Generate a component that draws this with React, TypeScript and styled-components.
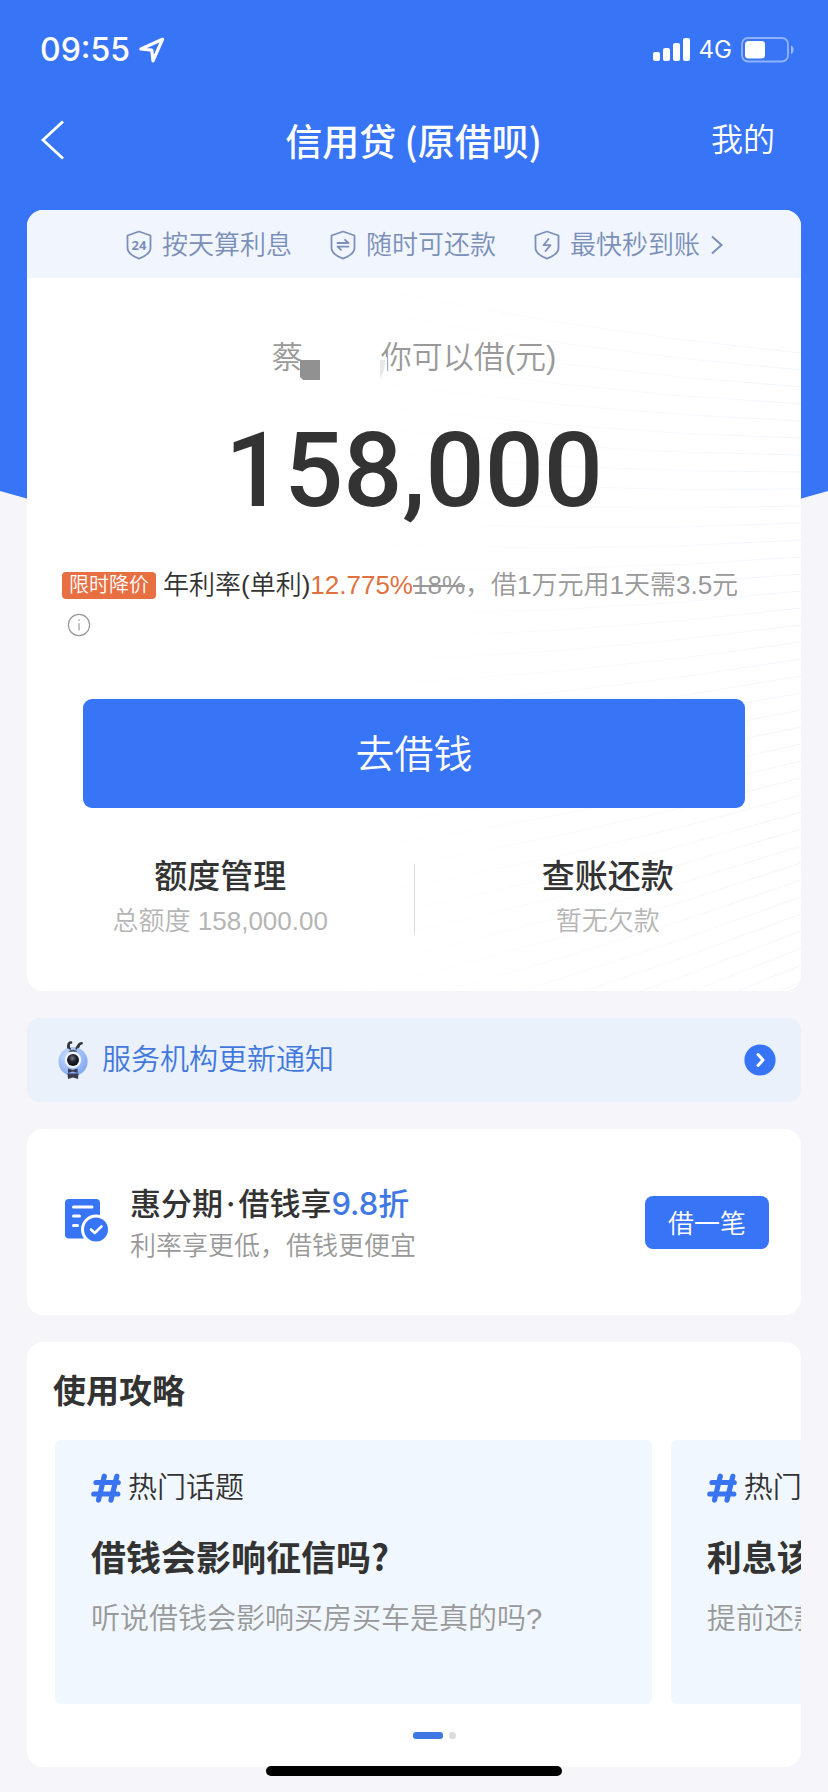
import React from "react";
import styled, { createGlobalStyle } from "styled-components";

const blue = "#3874f6";
const ink = "#333333";
const grey = "#999999";
const cjk = `"Noto Sans CJK SC", sans-serif`;

const GlobalStyle = createGlobalStyle`
  *, *::before, *::after { box-sizing: border-box; }
  body {
    margin: 0;
    background: #f5f5fa;
    color: ${ink};
    font-family: "Liberation Sans", ${cjk};
    font-weight: 350;
  }
  button { font-family: inherit; font-weight: inherit; border: 0; cursor: pointer; }
  h1, h2, h3, p { margin: 0; }
  svg { display: block; flex: none; }
`;

const Page = styled.div`
  position: relative;
  min-height: 100vh;
  padding-bottom: 24px;
  overflow: hidden;
`;

const Backdrop = styled.div`
  position: absolute;
  inset: 0 0 auto;
  height: 560px;
  background: ${blue};
  clip-path: circle(1480px at 50% -930px);
`;

const Header = styled.header`
  position: relative;
  color: #ffffff;
`;

const StatusBar = styled.div`
  display: flex;
  align-items: center;
  justify-content: space-between;
  height: 100px;
  padding: 0 33px 0 40px;
  font-family: Inter, sans-serif;
`;

const StatusGroup = styled.div`
  display: flex;
  align-items: center;
  gap: 9px;
`;

const Clock = styled.span`
  font-size: 32px;
  font-weight: 500;
  line-height: 40px;
`;

const Network = styled.span`
  font-size: 24px;
  font-weight: 400;
  line-height: 32px;
`;

const NavBar = styled.nav`
  display: grid;
  grid-template-columns: 1fr auto 1fr;
  align-items: center;
  height: 80px;
  margin-bottom: 30px;
  padding: 0 53px 0 40px;
`;

const BackButton = styled.button`
  justify-self: start;
  padding: 0;
  background: none;
`;

const NavTitle = styled.h1`
  margin-left: 12px;
  font-family: ${cjk};
  font-size: 37px;
  font-weight: 500;
  line-height: 48px;
`;

const NavLink = styled.a`
  justify-self: end;
  color: inherit;
  font-size: 32px;
  line-height: 44px;
  text-decoration: none;
`;

const Content = styled.main`
  position: relative;
  display: flex;
  flex-direction: column;
  gap: 27px;
  padding: 0 27px;
`;

const Card = styled.section`
  position: relative;
  overflow: hidden;
  border-radius: 16px;
  background: #ffffff;
`;

const Waves = styled.svg`
  position: absolute;
  right: 0;
  top: 68px;
`;

const Benefits = styled.a`
  display: flex;
  align-items: center;
  justify-content: center;
  gap: 38px;
  height: 68px;
  padding: 2px 4px 0 26px;
  background: #f0f5fe;
  color: #7b8fb8;
  font-size: 26px;
  line-height: 40px;
  text-decoration: none;
`;

const Benefit = styled.span`
  display: flex;
  align-items: center;
  gap: 10px;
`;

const CreditBody = styled.div`
  position: relative;
  padding: 58px 35px 48px;
`;

const Greeting = styled.p`
  display: flex;
  justify-content: center;
  color: ${grey};
  font-size: 31px;
  line-height: 44px;
`;

const HiddenName = styled.svg`
  position: relative;
  margin-right: -6px;
  overflow: visible;
`;

const Amount = styled.p`
  margin-top: 31px;
  font-family: Roboto, sans-serif;
  font-size: 104px;
  font-weight: 500;
  line-height: 120px;
  text-align: center;
`;

const Rate = styled.p`
  margin-top: 34px;
  color: ${grey};
  font-size: 26px;
  line-height: 40px;
`;

const Tag = styled.span`
  display: inline-block;
  margin-right: 7px;
  padding: 0 7px;
  border-radius: 4px;
  background: #e76f42;
  color: #ffffff;
  font-size: 20px;
  line-height: 27px;
  vertical-align: 2px;
`;

const Strong = styled.span`
  color: ${ink};
`;

const Hot = styled.span`
  color: #e0713f;
`;

const InfoButton = styled.button`
  display: block;
  height: 40px;
  padding: 0 5px;
  background: none;
`;

const BorrowButton = styled.button`
  display: block;
  width: calc(100% - 42px);
  height: 109px;
  margin: 54px auto 47px;
  padding: 0 0 6px;
  border-radius: 9px;
  background: ${blue};
  color: #ffffff;
  font-size: 39px;
`;

const Stats = styled.div`
  display: flex;
  align-items: center;
  margin: 0 -35px;
`;

const Stat = styled.a`
  flex: 1;
  color: ${ink};
  text-align: center;
  text-decoration: none;
`;

const Divider = styled.span`
  width: 1px;
  height: 71px;
  background: #dddddd;
`;

const SectionTitle = styled.h2`
  font-size: 33px;
  font-weight: 500;
  line-height: 44px;
`;

const StatNote = styled.p`
  color: #b5b5b5;
  font-size: 26px;
  line-height: 44px;
`;

const Notice = styled.a`
  display: flex;
  align-items: center;
  height: 84px;
  padding: 0 25px 0 31px;
  border-radius: 12px;
  background: #eaf1fb;
  color: #4278dd;
  font-size: 29px;
  line-height: 40px;
  text-decoration: none;
`;

const NoticeText = styled.span`
  flex: 1;
  margin-left: 14px;
`;

const Promo = styled(Card)`
  display: flex;
  align-items: center;
  height: 186px;
  padding: 0 32px 0 38px;
`;

const PromoText = styled.div`
  flex: 1;
  margin-left: 21px;
  padding-top: 4px;
`;

const PromoTitle = styled.h2`
  font-family: Inter, ${cjk};
  font-size: 31px;
  font-weight: 500;
  line-height: 44px;
`;

const Separator = styled.span`
  margin: 0 3px;
`;

const Discount = styled.span`
  color: #3f78e4;
`;

const PromoNote = styled.p`
  color: ${grey};
  font-size: 26px;
  line-height: 40px;
`;

const PromoButton = styled.button`
  height: 53px;
  padding: 0 23px 2px;
  border-radius: 8px;
  background: ${blue};
  color: #ffffff;
  font-size: 26px;
`;

const Guide = styled(Card)`
  padding: 28px 0 28px 26px;
`;

const GuideTitle = styled(SectionTitle)`
  font-weight: 700;
`;

const Slides = styled.div`
  display: flex;
  gap: 19px;
  margin-top: 26px;
  padding-left: 2px;
  overflow: hidden;
`;

const Slide = styled.article`
  flex: 0 0 80%;
  height: 264px;
  padding: 28px 36px;
  border-radius: 6px;
  background: #f0f7fe;
  white-space: nowrap;
`;

const Topic = styled.p`
  display: flex;
  align-items: center;
  gap: 7px;
  font-size: 29px;
  line-height: 40px;
`;

const SlideTitle = styled.h3`
  margin-top: 24px;
  font-family: ${cjk};
  font-size: 35px;
  font-weight: 700;
  line-height: 48px;
`;

const SlideNote = styled.p`
  margin-top: 19px;
  color: ${grey};
  font-size: 29px;
  line-height: 40px;
`;

const Dots = styled.div`
  display: flex;
  justify-content: center;
  gap: 6px;
  margin-top: 28px;
  padding-left: 14px;
`;

const Dot = styled.span<{ $active?: boolean }>`
  width: ${(p) => (p.$active ? 30 : 7)}px;
  height: 7px;
  border-radius: 3px;
  background: ${(p) => (p.$active ? "#3f78e4" : "#dddddd")};
`;

const HomeIndicator = styled.div`
  position: absolute;
  bottom: 16px;
  left: 50%;
  width: 296px;
  height: 10px;
  border-radius: 5px;
  background: #000000;
  transform: translateX(-50%);
`;

const Shield = ({ children }: { children: React.ReactNode }) => (
  <svg width="26" height="30" viewBox="0 0 26 30" fill="none" stroke="currentColor" strokeWidth="1.8" strokeLinejoin="round" strokeLinecap="round">
    <path d="M13 1.5 L24.5 5.5 V18 C24.5 23.5 18.5 26.5 13 28.7 C7.5 26.5 1.5 23.5 1.5 18 V5.5 Z" />
    {children}
  </svg>
);

const HashIcon = () => (
  <svg width="30" height="30" viewBox="0 0 30 30" fill="none" stroke="#3874f0" strokeWidth="5.2" strokeLinecap="round">
    <path d="M13.3 3.2 L7.5 27 M25.8 3.4 L20 27.2 M5 9.5 H27.2 M2.8 21 H26.8" />
  </svg>
);

const waveLines = Array.from({ length: 40 }, (_, i) => {
  const start = i * 24;
  const end = 75 + i * 17;
  return `M0 ${start} Q240 ${(start + end) / 2 + 14} 480 ${end}`;
});

const slides = [
  { title: "借钱会影响征信吗?", note: "听说借钱会影响买房买车是真的吗?" },
  { title: "利息该怎么算?", note: "提前还款利息怎么算?" },
];

export default function App() {
  return (
    <Page>
      <GlobalStyle />
      <Backdrop />
      <Header>
        <StatusBar>
          <StatusGroup>
            <Clock>09:55</Clock>
            <svg width="26" height="26" viewBox="0 0 26 26" fill="none" stroke="#fff" strokeWidth="3.2" strokeLinejoin="round">
              <path d="M23.5 2.3 L2 12 L12.8 13.2 L14 23.8 Z" />
            </svg>
          </StatusGroup>
          <StatusGroup>
            <svg width="37" height="24" viewBox="0 0 37 24" fill="#fff">
              <rect x="0" y="14" width="7" height="9" rx="2" />
              <rect x="10" y="10" width="7" height="13" rx="2" />
              <rect x="20" y="5" width="7" height="18" rx="2" />
              <rect x="30" y="0" width="7" height="23" rx="2" />
            </svg>
            <Network>4G</Network>
            <svg width="54" height="26" viewBox="0 0 54 26">
              <rect x="1" y="1" width="46" height="23.5" rx="6" fill="none" stroke="#fff" strokeOpacity=".45" strokeWidth="1.8" />
              <rect x="4" y="4" width="20" height="17.5" rx="3.5" fill="#fff" />
              <path d="M50 8.5 C53.6 10 53.6 15.5 50 17 Z" fill="#fff" fillOpacity=".5" />
            </svg>
          </StatusGroup>
        </StatusBar>
        <NavBar>
          <BackButton aria-label="返回">
            <svg width="24" height="40" viewBox="0 0 24 40" fill="none" stroke="#fff" strokeWidth="2.8">
              <path d="M23 1.5 L3 20 L23 38.5" />
            </svg>
          </BackButton>
          <NavTitle>信用贷 (原借呗)</NavTitle>
          <NavLink href="#mine">我的</NavLink>
        </NavBar>
      </Header>

      <Content>
        <Card>
          <Waves width="480" height="713" viewBox="0 0 480 713" fill="none" aria-hidden="true">
            <defs>
              <linearGradient id="fade" gradientUnits="userSpaceOnUse" x1="0" y1="0" x2="480" y2="0">
                <stop offset="0" stopColor="#eef3fa" stopOpacity="0" />
                <stop offset="1" stopColor="#eef3fa" stopOpacity=".8" />
              </linearGradient>
            </defs>
            {waveLines.map((d) => (
              <path key={d} d={d} stroke="url(#fade)" />
            ))}
          </Waves>
          <Benefits href="#benefits">
            <Benefit>
              <Shield>
                <text x="13" y="19.5" textAnchor="middle" fontSize="13" fontWeight="700" fill="currentColor" stroke="none" fontFamily="Open Sans, sans-serif">24</text>
              </Shield>
              按天算利息
            </Benefit>
            <Benefit>
              <Shield>
                <path d="M7.5 13 H18.5 L15 9.8 M18.5 16.6 H7.5 L11 19.8" />
              </Shield>
              随时可还款
            </Benefit>
            <Benefit>
              <Shield>
                <path d="M14.5 9 L9.5 15.2 H16.5 L11.5 21" />
              </Shield>
              最快秒到账
              <svg width="14" height="20" viewBox="0 0 14 20" fill="none" stroke="currentColor" strokeWidth="2">
                <path d="M2 1.5 L11.5 10 L2 18.5" />
              </svg>
            </Benefit>
          </Benefits>
          <CreditBody>
            <Greeting>
              蔡
              <HiddenName width="84" height="44" viewBox="0 0 84 44" aria-hidden="true">
                <path d="M-3 24 H17 V44 H0 L-3 41 Z" fill="#919191" />
                <path d="M76 21 H84 V46 H76 Z" fill="#fff" />
                <path d="M77 24 H82 C82 32 80 38 77 43 Z" fill="#e8e8e8" />
              </HiddenName>
              你可以借(元)
            </Greeting>
            <Amount>158,000</Amount>
            <Rate>
              <Tag>限时降价</Tag>
              <Strong>年利率(单利)</Strong>
              <Hot>12.775%</Hot>
              <s>18%</s>，借1万元用1天需3.5元
            </Rate>
            <InfoButton aria-label="利率说明">
              <svg width="24" height="24" viewBox="0 0 24 24" fill="none" stroke="#999" strokeWidth="1.2">
                <circle cx="12" cy="12" r="10.6" />
                <path d="M12 10.2 V17.5 M12 6.4 V8" />
              </svg>
            </InfoButton>
            <BorrowButton>去借钱</BorrowButton>
            <Stats>
              <Stat href="#limit">
                <SectionTitle>额度管理</SectionTitle>
                <StatNote>总额度 158,000.00</StatNote>
              </Stat>
              <Divider />
              <Stat href="#bills">
                <SectionTitle>查账还款</SectionTitle>
                <StatNote>暂无欠款</StatNote>
              </Stat>
            </Stats>
          </CreditBody>
        </Card>

        <Notice href="#notice">
          <svg width="30" height="38" viewBox="0 0 30 38">
            <defs>
              <radialGradient id="head" cx="35%" cy="30%" r="75%">
                <stop offset="0" stopColor="#c9dcfc" />
                <stop offset="1" stopColor="#7fa8f2" />
              </radialGradient>
              <radialGradient id="eye" cx="45%" cy="35%" r="60%">
                <stop offset="0" stopColor="#77808e" />
                <stop offset=".5" stopColor="#20242e" />
                <stop offset="1" stopColor="#0e1016" />
              </radialGradient>
            </defs>
            <circle cx="15" cy="20.5" r="14.6" fill="url(#head)" />
            <path d="M12.6 8.5 C11 7 10.6 5.5 11 3" fill="none" stroke="#34363f" strokeWidth="1.6" />
            <path d="M18.2 8.5 C18.4 6 19.5 4.4 21.5 3.4" fill="none" stroke="#34363f" strokeWidth="1.6" />
            <path d="M13 1.5 C11 1.3 10 3.5 10.4 6.5" fill="none" stroke="#34363f" strokeWidth="2.6" strokeLinecap="round" />
            <path d="M20.3 5.8 C20.6 3.4 21.8 2.3 23.6 2.2" fill="none" stroke="#34363f" strokeWidth="2.6" strokeLinecap="round" />
            <path d="M10.5 10.8 C12 8 18 8 19.5 10.8 Z" fill="#4a4d63" />
            <circle cx="15" cy="19" r="8.2" fill="#f2f5fb" />
            <circle cx="15" cy="19" r="6" fill="url(#eye)" />
            <path d="M10 27.5 L14.8 29 L19.6 27.5 V32 L14.8 30.5 L10 32 Z M9.5 32.5 H20.5 L20 38 L15 36.6 L10 38 Z" fill="#3b3b52" />
          </svg>
          <NoticeText>服务机构更新通知</NoticeText>
          <svg width="32" height="32" viewBox="0 0 32 32" fill="none">
            <circle cx="16" cy="16" r="15.6" fill={blue} />
            <path d="M14 10.5 L19 16 L14 21.5" stroke="#fff" strokeWidth="3" strokeLinecap="round" strokeLinejoin="round" />
          </svg>
        </Notice>

        <Promo>
          <svg width="44" height="48" viewBox="0 0 44 48" fill="none" strokeLinecap="round" strokeLinejoin="round">
            <rect x="0" y="1" width="35" height="39.5" rx="4" fill={blue} />
            <path d="M8.5 9 H27 M8.5 18 H14.5 M8.5 27.5 H12.5" stroke="#fff" strokeWidth="3" />
            <circle cx="31" cy="31.5" r="15" fill="#fff" />
            <circle cx="31" cy="31.5" r="12" fill={blue} />
            <path d="M26 31.5 L29.8 35 L36.5 28.3" stroke="#fff" strokeWidth="2.6" />
          </svg>
          <PromoText>
            <PromoTitle>
              惠分期<Separator>·</Separator>借钱享<Discount>9.8折</Discount>
            </PromoTitle>
            <PromoNote>利率享更低，借钱更便宜</PromoNote>
          </PromoText>
          <PromoButton>借一笔</PromoButton>
        </Promo>

        <Guide>
          <GuideTitle>使用攻略</GuideTitle>
          <Slides>
            {slides.map((s) => (
              <Slide key={s.title}>
                <Topic>
                  <HashIcon />
                  热门话题
                </Topic>
                <SlideTitle>{s.title}</SlideTitle>
                <SlideNote>{s.note}</SlideNote>
              </Slide>
            ))}
          </Slides>
          <Dots>
            <Dot $active />
            <Dot />
          </Dots>
        </Guide>
      </Content>
      <HomeIndicator />
    </Page>
  );
}
